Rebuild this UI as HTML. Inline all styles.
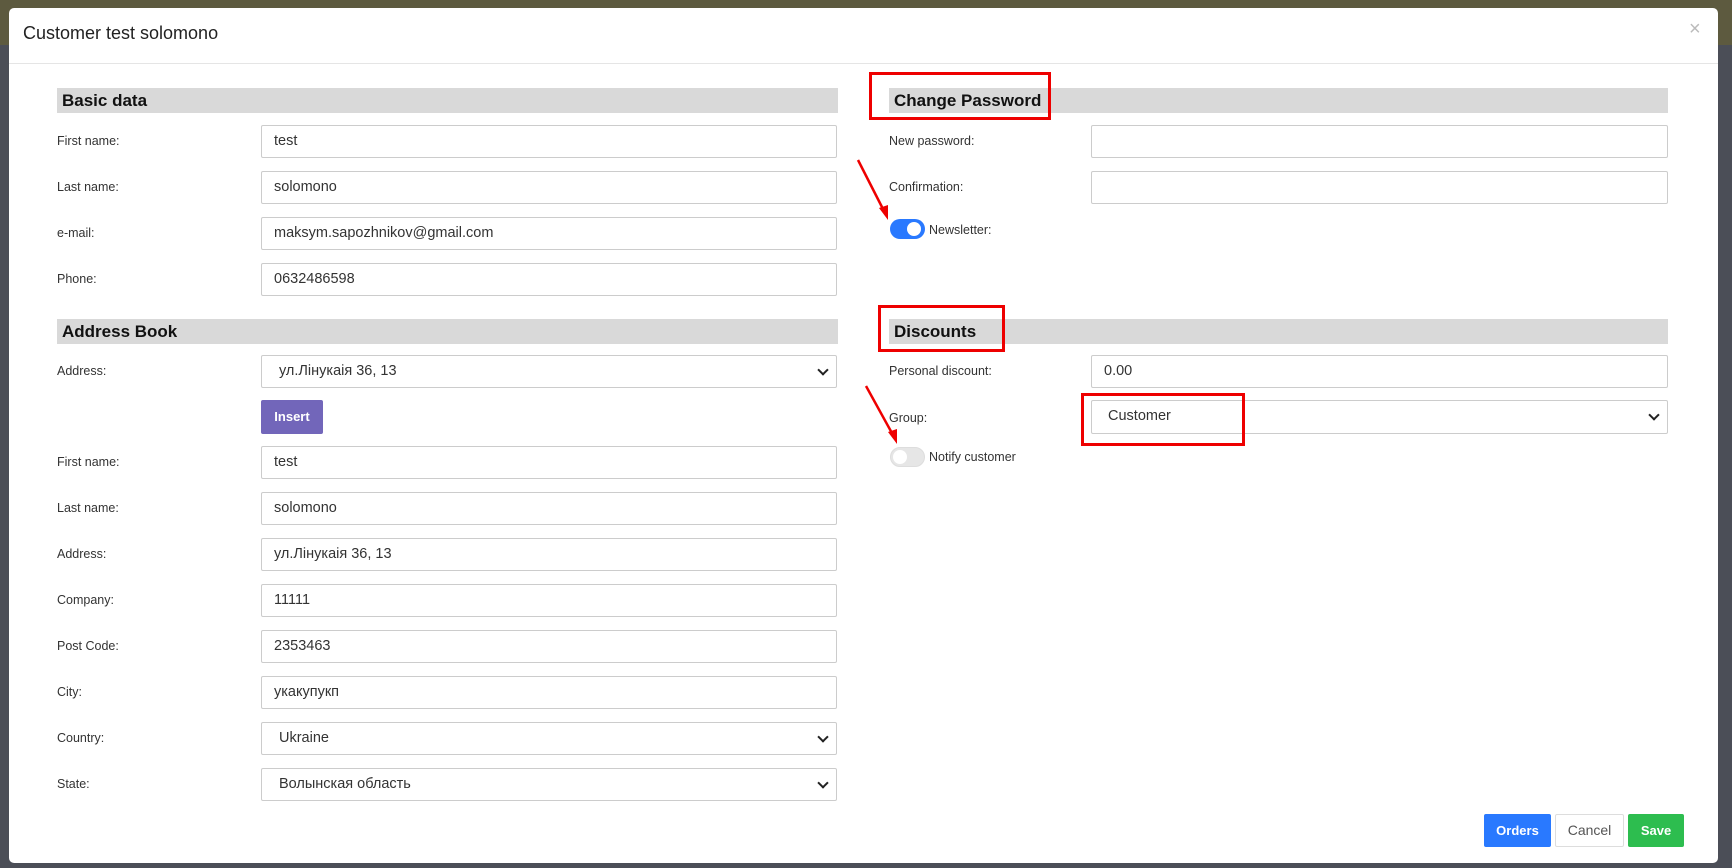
<!DOCTYPE html>
<html><head><meta charset="utf-8">
<style>
*{box-sizing:border-box;margin:0;padding:0}
body{width:1732px;height:868px;overflow:hidden;background:#4b4e57;font-family:"Liberation Sans","Noto Sans CJK SC",sans-serif;position:relative}
.top{position:absolute;left:0;top:0;width:1732px;height:45px;background:#5d5a3f}
.modal{position:absolute;left:9px;top:8px;width:1709px;height:855px;background:#fff;border-radius:5px}
.a{position:absolute}
.title{left:23px;top:23px;font-size:18px;color:#222}
.close{left:1689px;top:18px;font-size:20px;color:#bbb}
.hr{left:9px;top:63px;width:1709px;height:1px;background:#e5e5e5}
.bar{position:absolute;height:25px;background:#d9d9d9;font-size:17px;font-weight:bold;color:#111;padding-left:5px;line-height:25px}
.lbl{position:absolute;font-size:12.5px;color:#333}
.inp{position:absolute;height:33px;border:1px solid #ccc;border-radius:2px;font-size:14.5px;color:#333;padding-left:12px;line-height:31px;background:#fff}
.sel::after{content:"";position:absolute;right:9px;top:10px;width:6px;height:6px;border-right:2px solid #222;border-bottom:2px solid #222;transform:rotate(45deg)}
.btn{position:absolute;height:33px;border-radius:2px;font-size:13px;font-weight:bold;color:#fff;text-align:center;line-height:33px}
.red{position:absolute;border:3px solid #e00;}
</style></head><body>
<div class="top"></div>
<div class="modal"></div>
<div class="a title">Customer test solomono</div>
<div class="a close">×</div>
<div class="a hr"></div>

<div class="bar" style="left:57px;top:88px;width:781px">Basic data</div>
<div class="lbl" style="left:57px;top:134px">First name:</div><div class="inp" style="left:261px;top:125px;width:576px">test</div>
<div class="lbl" style="left:57px;top:180px">Last name:</div><div class="inp" style="left:261px;top:171px;width:576px">solomono</div>
<div class="lbl" style="left:57px;top:226px">e-mail:</div><div class="inp" style="left:261px;top:217px;width:576px">maksym.sapozhnikov@gmail.com</div>
<div class="lbl" style="left:57px;top:272px">Phone:</div><div class="inp" style="left:261px;top:263px;width:576px">0632486598</div>

<div class="bar" style="left:57px;top:319px;width:781px">Address Book</div>
<div class="lbl" style="left:57px;top:364px">Address:</div><div class="inp sel" style="left:261px;top:355px;width:576px;padding-left:17px">ул.Лінукаія 36, 13</div>
<div class="btn" style="left:261px;top:400px;width:62px;height:34px;line-height:34px;background:#7266ba">Insert</div>
<div class="lbl" style="left:57px;top:455px">First name:</div><div class="inp" style="left:261px;top:446px;width:576px">test</div>
<div class="lbl" style="left:57px;top:501px">Last name:</div><div class="inp" style="left:261px;top:492px;width:576px">solomono</div>
<div class="lbl" style="left:57px;top:547px">Address:</div><div class="inp" style="left:261px;top:538px;width:576px">ул.Лінукаія 36, 13</div>
<div class="lbl" style="left:57px;top:593px">Company:</div><div class="inp" style="left:261px;top:584px;width:576px">11111</div>
<div class="lbl" style="left:57px;top:639px">Post Code:</div><div class="inp" style="left:261px;top:630px;width:576px">2353463</div>
<div class="lbl" style="left:57px;top:685px">City:</div><div class="inp" style="left:261px;top:676px;width:576px">укакупукп</div>
<div class="lbl" style="left:57px;top:731px">Country:</div><div class="inp sel" style="left:261px;top:722px;width:576px;padding-left:17px">Ukraine</div>
<div class="lbl" style="left:57px;top:777px">State:</div><div class="inp sel" style="left:261px;top:768px;width:576px;padding-left:17px">Волынская область</div>

<div class="bar" style="left:889px;top:88px;width:779px">Change Password</div>
<div class="lbl" style="left:889px;top:134px">New password:</div><div class="inp" style="left:1091px;top:125px;width:577px"></div>
<div class="lbl" style="left:889px;top:180px">Confirmation:</div><div class="inp" style="left:1091px;top:171px;width:577px"></div>
<div class="a" style="left:890px;top:219px;width:35px;height:20px;border-radius:10px;background:#2979ff"></div>
<div class="a" style="left:907px;top:222px;width:14px;height:14px;border-radius:7px;background:#fff"></div>
<div class="lbl" style="left:929px;top:223px">Newsletter:</div>

<div class="bar" style="left:889px;top:319px;width:779px">Discounts</div>
<div class="lbl" style="left:889px;top:364px">Personal discount:</div><div class="inp" style="left:1091px;top:355px;width:577px">0.00</div>
<div class="lbl" style="left:889px;top:411px">Group:</div><div class="inp sel" style="left:1091px;top:400px;width:577px;height:34px;padding-left:16px">Customer</div>
<div class="a" style="left:890px;top:447px;width:35px;height:20px;border-radius:10px;background:#e6e6e6;border:1px solid #ddd"></div>
<div class="a" style="left:893px;top:450px;width:14px;height:14px;border-radius:7px;background:#fff"></div>
<div class="lbl" style="left:929px;top:450px">Notify customer</div>

<div class="red" style="left:869px;top:72px;width:182px;height:48px"></div>
<div class="red" style="left:878px;top:305px;width:127px;height:47px"></div>
<div class="red" style="left:1081px;top:393px;width:164px;height:53px"></div>
<svg class="a" style="left:0;top:0" width="1732" height="868">
<line x1="858" y1="160" x2="884" y2="211" stroke="#e00" stroke-width="2.5"/>
<polygon points="888,220 879,208 888,205" fill="#e00"/>
<line x1="866" y1="386" x2="893" y2="435" stroke="#e00" stroke-width="2.5"/>
<polygon points="897,444 888,432 897,429" fill="#e00"/>
</svg>

<div class="btn" style="left:1484px;top:814px;width:67px;background:#2979ff">Orders</div>
<div class="btn" style="left:1555px;top:814px;width:69px;background:#fff;border:1px solid #ddd;color:#555;font-weight:normal;line-height:31px;font-size:14px">Cancel</div>
<div class="btn" style="left:1628px;top:814px;width:56px;background:#2dbd4f">Save</div>
</body></html>
